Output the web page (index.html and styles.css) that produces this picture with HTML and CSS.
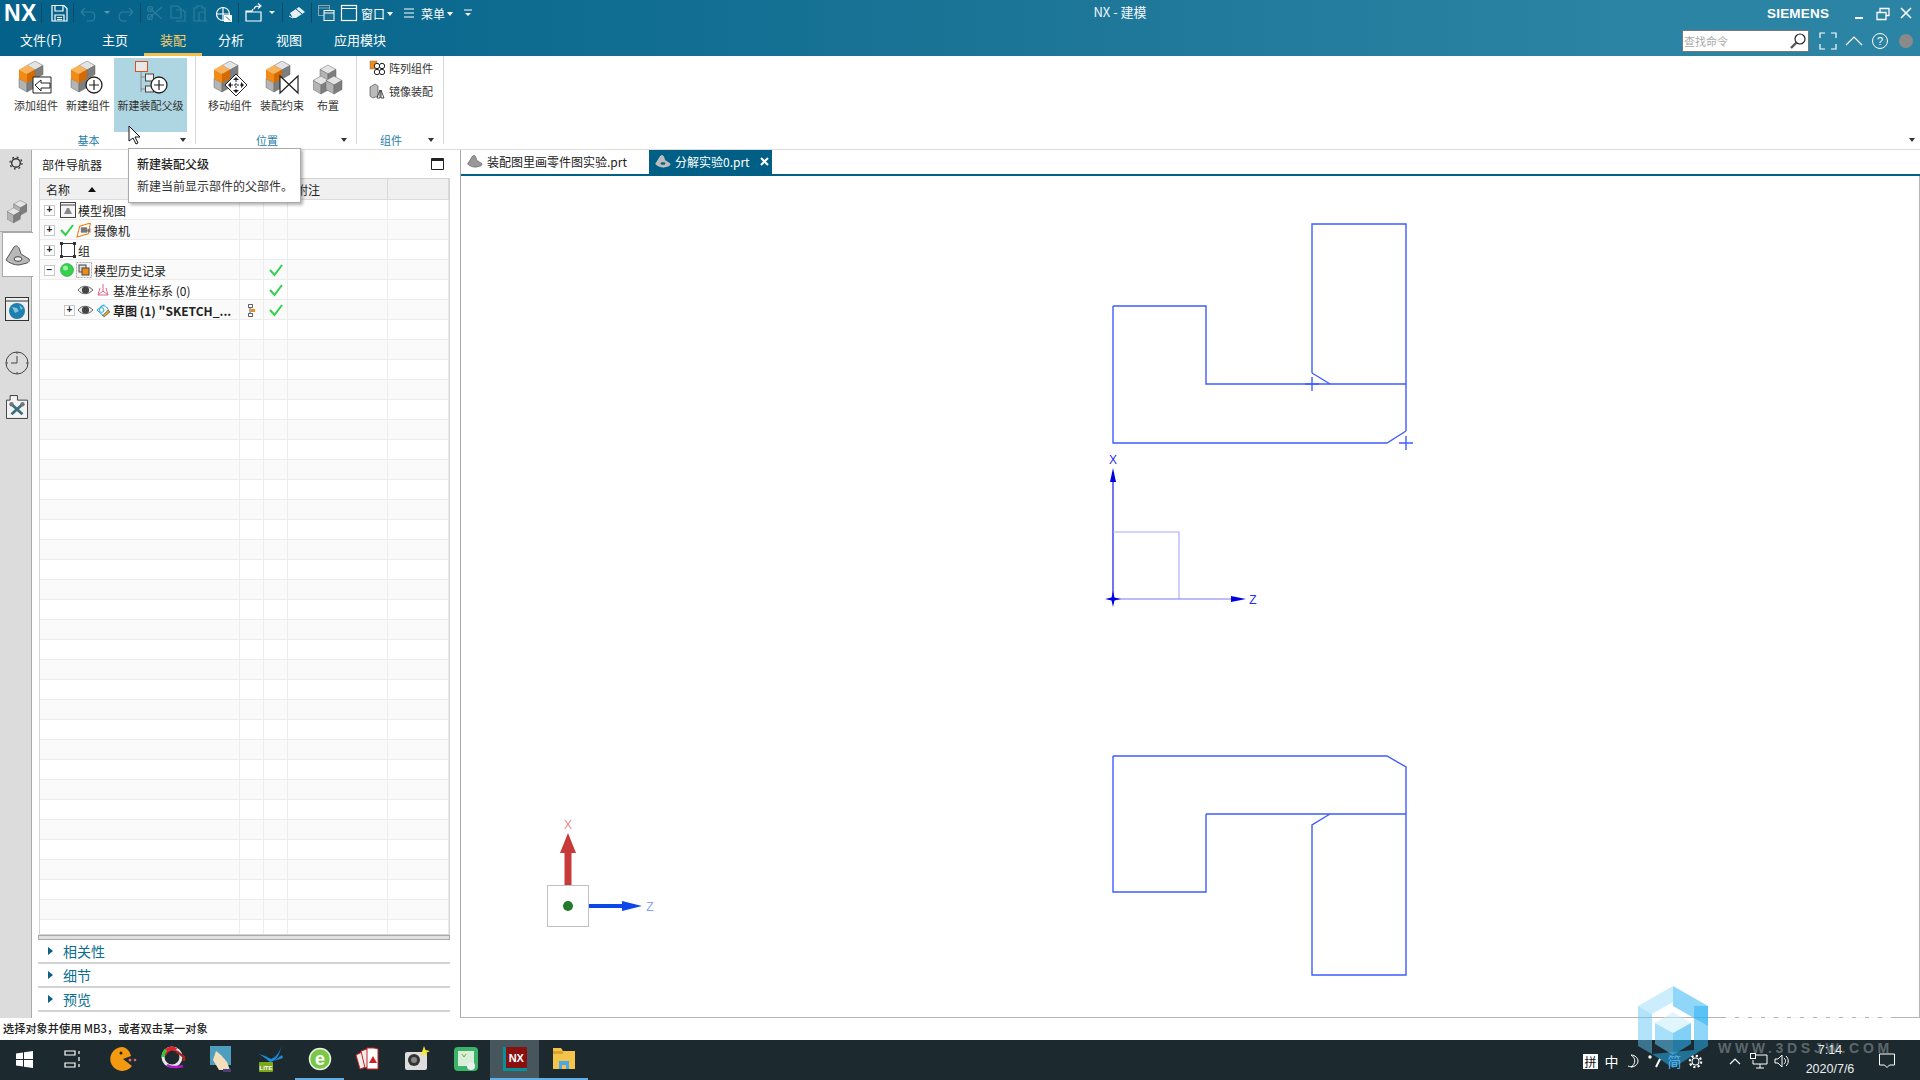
FILE: index.html
```html
<!DOCTYPE html>
<html lang="zh-CN">
<head>
  <meta charset="UTF-8">
  <title>NX - 建模</title>
  <link rel="stylesheet" href="styles.css">
</head>
<body>
  <svg class="defs">
    <defs>
      <g id="cube-g">
        <path fill="#e4e4e4" stroke="#666" stroke-width=".5" d="M0 4.500 8 0l8 4.500L8 9z"/>
        <path fill="#b4b4b4" stroke="#666" stroke-width=".5" d="M0 4.500 8 9v9l-8-4.500z"/>
        <path fill="#7e7e7e" stroke="#666" stroke-width=".5" d="M16 4.500 8 9v9l8-4.500z"/>
      </g>
      <g id="cube-o">
        <path fill="#f9b25c" d="M0 4.500 8 0l8 4.500L8 9z"/>
        <path fill="#f28a16" d="M0 4.500 8 9v9l-8-4.500z"/>
        <path fill="#d66a02" d="M16 4.500 8 9v9l8-4.500z"/>
      </g>
      <g id="stack">
        <use href="#cube-g" x="0" y="13"/>
        <use href="#cube-g" x="8" y="0"/>
        <use href="#cube-o" x="0" y="4"/>
      </g>
      <g id="plus-circle">
        <circle r="8" fill="#fff" stroke="#222" stroke-width="1.300"/>
        <path d="M-5 0h10M0-5v10" stroke="#222" stroke-width="1.200"/>
      </g>
      <path id="check" d="M1 7l4.500 5L13 2" fill="none" stroke="#2fd04a" stroke-width="2"/>
      <g id="eye">
        <path d="M0 6c4-5 10-5 15 0-5 5-11 5-15 0z" fill="#eee" stroke="#666"/>
        <circle cx="7.500" cy="6" r="3.600" fill="#444"/>
      </g>
    </defs>
  </svg>

  <header class="topbar">
    <div class="title-row">
      <div class="qa">
        <span class="logo">NX</span>
        <svg class="qa-icons" width="320" height="30" viewBox="41 0 320 30">
          <path class="sep" d="M41.500 3v20M73.500 3v20M140.500 3v20M238.500 3v20M282.500 3v20M311.500 3v20"/>
          <g class="ln">
            <path d="M52 5.500h12l3 3v12.500H52z"/>
            <path d="M55 6v5h8V6M55 21v-6h9v6M57 17.500h5M57 19.500h5"/>
          </g>
          <g class="dim">
            <path d="M81 12h10c5 0 5 9 0 9h-4M81 12l4-4M81 12l4 4"/>
            <path d="M133 12h-10c-5 0-5 9 0 9h4M133 12l-4-4M133 12l-4 4"/>
            <path d="M149 8l6 5 7-6M149 18l6-5 7 6"/>
            <circle cx="150" cy="9" r="2.500"/><circle cx="150" cy="17" r="2.500"/>
            <path d="M171 6h7l3 3v9h-10zM176 10h7l2 2v9h-9"/>
            <path d="M194 8h3V6h5v2h3v13h-11zM200 12h5M199 12v9h8"/>
          </g>
          <path class="tri-dim" d="M104 11h6l-3 3z"/>
          <g class="ln">
            <circle cx="223" cy="14" r="6.500"/>
            <path d="M216 14h14M223 7v14"/>
          </g>
          <rect x="224" y="15" width="8" height="7" fill="#fff"/>
          <path d="M226 16.500l4 4" stroke="#04628a" stroke-width="1"/>
          <g class="ln">
            <path d="M246 12h15v9h-15zM246 12v-1h6l1-2"/>
            <path d="M254 9c1-3 3-3 6-3M258 3.500l3 2.500-3 2.500"/>
          </g>
          <path class="tri" d="M269 11h6l-3 3z"/>
          <path fill="#e8f1f5" d="M290 13l9-6 6 5-9 6-3 0z"/>
          <path d="M296 9l6 5" stroke="#04628a"/>
          <path d="M289 16l4 2" stroke="#e8f1f5"/>
          <rect x="318.500" y="5.500" width="11" height="10" class="gray-ln"/>
          <path d="M319 8h10" class="gray-ln"/>
          <rect x="324" y="10.500" width="10" height="10" fill="#1a7090" stroke="#fff"/>
          <path d="M324 13h10" stroke="#fff"/>
          <rect x="341.500" y="5.500" width="15" height="15" class="ln"/>
          <path d="M342 8.500h14" stroke="#fff"/>
        </svg>
        <span class="qa-text">窗口</span>
        <span class="tri-d"></span>
        <svg class="burger" width="12" height="12" viewBox="0 0 12 12"><path d="M1 2h10M1 6h10M1 10h10" stroke="#fff"/></svg>
        <span class="qa-text">菜单</span>
        <span class="tri-d"></span>
        <svg class="more" width="10" height="10" viewBox="0 0 10 10"><path d="M1 2h8" stroke="#fff"/><path d="M2 5h6L5 8z" fill="#fff"/></svg>
      </div>
      <div class="win-title">NX - 建模</div>
      <div class="siemens">SIEMENS</div>
      <svg class="win-btns" width="70" height="30" viewBox="0 0 70 30">
        <path d="M5 18h8" stroke="#fff" stroke-width="2"/>
        <path d="M27 12.500h9v7h-9zM30 12v-3.500h9v7h-3" fill="none" stroke="#fff" stroke-width="1.300"/>
        <path d="M51 8l10 10M61 8 51 18" stroke="#fff" stroke-width="1.600"/>
      </svg>
    </div>
    <div class="menu-row">
      <div class="menu-tab menu-file">文件(F)</div>
      <div class="menu-tab">主页</div>
      <div class="menu-tab menu-active">装配</div>
      <div class="menu-tab">分析</div>
      <div class="menu-tab">视图</div>
      <div class="menu-tab">应用模块</div>
      <div class="menu-right">
        <div class="search">
          <span>查找命令</span>
          <svg width="18" height="18" viewBox="0 0 18 18"><circle cx="11" cy="7" r="5" fill="none" stroke="#222" stroke-width="1.200"/><path d="M7.500 10.500 2 16" stroke="#555" stroke-width="2.400"/></svg>
        </div>
        <svg width="110" height="24" viewBox="0 0 110 24">
          <path d="M11 9V4h5M22 4h5v5M11 15v5h5M27 15v5h-5" fill="none" stroke="#fff" stroke-width="1.200"/>
          <path d="M37 16l8-8 8 8" fill="none" stroke="#fff" stroke-width="1.200"/>
          <circle cx="71" cy="12" r="7.500" fill="none" stroke="#fff"/>
          <text x="71" y="16" class="help">?</text>
          <circle cx="97" cy="12" r="7" fill="#8a8a8a"/>
        </svg>
      </div>
    </div>
  </header>

  <section class="ribbon">
    <div class="r-group r-basic">
      <div class="r-body">
        <div class="big-btn">
          <svg width="48" height="34" viewBox="0 0 48 34">
            <use href="#stack" x="7"/>
            <path d="M21 16h18v16H21z" fill="#fff" stroke="#222"/>
            <path d="M23 24l6-5v3h9v5h-9v3z" fill="#fff" stroke="#222"/>
          </svg>
          <span>添加组件</span>
        </div>
        <div class="big-btn">
          <svg width="48" height="34" viewBox="0 0 48 34">
            <use href="#stack" x="7"/>
            <use href="#plus-circle" x="30" y="24"/>
          </svg>
          <span>新建组件</span>
        </div>
        <div class="big-btn big-hover">
          <svg width="48" height="34" viewBox="0 0 48 34">
            <rect x="8.500" y=".5" width="12" height="10" fill="#e8e8e8" stroke="#d4541a"/>
            <path d="M14 11v20M14 16h4M14 28h4" stroke="#888"/>
            <rect x="18.500" y="13" width="8" height="7" fill="#eee" stroke="#444"/>
            <rect x="18.500" y="25" width="8" height="6" fill="#eee" stroke="#444"/>
            <use href="#plus-circle" x="32" y="24"/>
          </svg>
          <span>新建装配父级</span>
        </div>
      </div>
      <div class="r-foot"><span>基本</span><i class="tri-s"></i></div>
    </div>
    <div class="r-group r-pos">
      <div class="r-body">
        <div class="big-btn">
          <svg width="48" height="36" viewBox="0 0 48 36">
            <use href="#stack" x="8"/>
            <path d="M30 13l11 11-11 11-11-11z" fill="#fff" stroke="#222"/>
            <path d="M30 16l3 3h-6zM30 32l3-3h-6zM22 24l3-3v6zM38 24l-3-3v6z" fill="#222"/>
            <path d="M30 19v10M25 24h10" stroke="#222" stroke-dasharray="2 1"/>
          </svg>
          <span class="lbl-up">移动组件</span>
        </div>
        <div class="big-btn">
          <svg width="48" height="34" viewBox="0 0 48 34">
            <use href="#stack" x="8"/>
            <path d="M22 15v17l18-17v17z" fill="#fff" stroke="#222" stroke-width="1.200"/>
          </svg>
          <span>装配约束</span>
        </div>
        <div class="big-btn big-narrow">
          <svg width="30" height="34" viewBox="0 0 30 34">
            <use href="#cube-g" x="7" y="4"/>
            <use href="#cube-g" x="0" y="15"/>
            <use href="#cube-g" x="13" y="15"/>
          </svg>
          <span>布置</span>
        </div>
      </div>
      <div class="r-foot"><span>位置</span><i class="tri-s"></i></div>
    </div>
    <div class="r-group r-comp">
      <div class="r-body small-col">
        <div class="small-btn">
          <svg width="16" height="16" viewBox="0 0 16 16">
            <rect x="1" y="1" width="7" height="8" fill="#f28a16" stroke="#777" stroke-width=".5"/>
            <circle cx="8" cy="6" r="2.700" fill="#fff" stroke="#222"/><circle cx="13" cy="6" r="2.700" fill="#fff" stroke="#222"/>
            <circle cx="8" cy="12" r="2.700" fill="#fff" stroke="#222"/><circle cx="13" cy="12" r="2.700" fill="#fff" stroke="#222"/>
          </svg>
          <span>阵列组件</span>
        </div>
        <div class="small-btn">
          <svg width="16" height="16" viewBox="0 0 16 16">
            <path d="M1 4l5-3 3 2v10l-5 2-3-2z" fill="#bbb" stroke="#555" stroke-width=".7"/>
            <path d="M8 15l3-8v8zM12 15V7l3 8z" fill="#fff" stroke="#222" stroke-width=".8"/>
          </svg>
          <span>镜像装配</span>
        </div>
      </div>
      <div class="r-foot"><span>组件</span><i class="tri-s"></i></div>
    </div>
    <div class="r-rest"><i class="tri-s"></i></div>
  </section>

  <main class="main">
    <aside class="strip">
      <div class="strip-item s-gear">
        <svg width="14" height="14" viewBox="0 0 14 14"><circle cx="7" cy="7" r="4.300" fill="none" stroke="#333" stroke-width="1.400"/><circle cx="7" cy="7" r="6" fill="none" stroke="#333" stroke-width="1.200" stroke-dasharray="2 2.700"/></svg>
      </div>
      <div class="strip-item s-parts">
        <svg width="20" height="24" viewBox="0 0 24 28"><use href="#cube-g" x="8" y="0"/><use href="#cube-g" x="0" y="9"/></svg>
      </div>
      <div class="strip-item s-active">
        <svg width="26" height="22" viewBox="0 0 26 22">
          <path d="M1 16 9 3c2-2 4-1 5 1l2 6 8 5c1 2 0 3-2 4l-8 2c-5 0-10-2-13-5z" fill="#b8b8b8" stroke="#555"/>
          <ellipse cx="13" cy="15" rx="4" ry="2.300" fill="#eee" stroke="#444"/>
        </svg>
      </div>
      <div class="strip-item s-web">
        <svg width="24" height="24" viewBox="0 0 24 24">
          <rect x=".5" y=".5" width="23" height="23" fill="#eee" stroke="#333"/>
          <path d="M1 4h22" stroke="#333"/>
          <circle cx="12" cy="14" r="8" fill="#1f7fae"/>
          <path d="M7 10l5 1 2 3-4 2zM14 8l4 3-2 2z" fill="#7cc6dd"/>
        </svg>
      </div>
      <div class="strip-item s-clock">
        <svg width="24" height="24" viewBox="0 0 24 24"><circle cx="12" cy="12" r="11" fill="none" stroke="#444"/><path d="M12 5v7H6M12 1v2M12 21v2M1 12h2M21 12h2" fill="none" stroke="#444"/></svg>
      </div>
      <div class="strip-item s-tools">
        <svg width="22" height="24" viewBox="0 0 24 26">
          <path d="M.5 5.500h4v-5h8v5h11v20H.5z" fill="#f3f3f3" stroke="#333"/>
          <path d="M6 21 18 10M6 10l12 11" stroke="#3b6f7e" stroke-width="3"/>
          <circle cx="18" cy="10" r="2.400" fill="#777"/><circle cx="6" cy="10" r="2.400" fill="#777"/>
        </svg>
      </div>
    </aside>

    <div class="nav">
      <div class="nav-head">
        <span>部件导航器</span>
        <svg width="13" height="12" viewBox="0 0 13 12"><path d="M.5.500h12v11H.5z" fill="#fff" stroke="#222"/><path d="M1 2h11" stroke="#222" stroke-width="2"/></svg>
      </div>
      <div class="tbl">
        <div class="row row-head"><i class="c-name">名称<b class="sort"></b></i><i></i><i></i><i class="c-note">附注</i><i></i></div>

        <div class="row">
          <i class="c-name"><u class="exp">+</u>
            <svg class="ti" width="16" height="16" viewBox="0 0 16 16"><rect x=".5" y=".5" width="15" height="15" fill="#f5f5f5" stroke="#444"/><path d="M1 3h14" stroke="#444"/><path d="M4 12l3-6 2 0 3 6z" fill="#888"/></svg>
            模型视图</i><i></i><i></i><i></i><i></i>
        </div>
        <div class="row alt">
          <i class="c-name"><u class="exp">+</u>
            <svg class="ti" width="14" height="14" viewBox="0 0 14 14"><use href="#check"/></svg>
            <svg class="ti" width="16" height="15" viewBox="0 0 14 14"><path d="M.5 13 3 3l10-3-2 10z" fill="#fff" stroke="#ef7e0f"/><rect x="4" y="4" width="6" height="5" fill="#777"/><path d="M10 6l3-1v4l-3-1z" fill="#777"/></svg>
            摄像机</i><i></i><i></i><i></i><i></i>
        </div>
        <div class="row">
          <i class="c-name"><u class="exp">+</u>
            <svg class="ti" width="16" height="16" viewBox="0 0 16 16"><rect x="1.500" y="1.500" width="13" height="13" fill="none" stroke="#333"/><path d="M0 0h3v3H0zM13 0h3v3h-3zM0 13h3v3H0zM13 13h3v3h-3z" fill="#333"/></svg>
            组</i><i></i><i></i><i></i><i></i>
        </div>
        <div class="row alt">
          <i class="c-name"><u class="exp">−</u>
            <svg class="ti" width="14" height="14" viewBox="0 0 14 14"><circle cx="7" cy="7" r="6.500" fill="#35d14a" stroke="#1f8f30" stroke-width=".5"/><circle cx="5.500" cy="5" r="2.500" fill="#9df0a8"/></svg>
            <svg class="ti" width="16" height="16" viewBox="0 0 16 16"><rect x=".5" y=".5" width="15" height="15" fill="#f4f4f4" stroke="#aaa" stroke-dasharray="2 1"/><rect x="3" y="3" width="7" height="7" fill="#ddd" stroke="#444"/><rect x="6" y="6" width="7" height="7" fill="#f28a16" stroke="#444"/></svg>
            模型历史记录</i><i></i><i class="c-chk"><svg width="14" height="14" viewBox="0 0 14 14"><use href="#check"/></svg></i><i></i><i></i>
        </div>
        <div class="row">
          <i class="c-name c-sub"><svg class="ti" width="15" height="12" viewBox="0 0 15 12"><use href="#eye"/></svg>
            <svg class="ti" width="14" height="14" viewBox="0 0 14 14"><path d="M7 1v7M7 8 2 12M7 8l5 4M2 12h10M4 5l-2 7M10 5l2 7" fill="none" stroke="#dd6a88"/></svg>
            基准坐标系 (0)</i><i></i><i class="c-chk"><svg width="14" height="14" viewBox="0 0 14 14"><use href="#check"/></svg></i><i></i><i></i>
        </div>
        <div class="row alt">
          <i class="c-name c-sub c-bold"><u class="exp">+</u><svg class="ti" width="15" height="12" viewBox="0 0 15 12"><use href="#eye"/></svg>
            <svg class="ti" width="14" height="15" viewBox="0 0 15 15"><path d="M1 7 9 1M1 7l8 7M5 3c5-2 9 2 8 6" fill="none" stroke="#19a6d8"/><circle cx="6" cy="7" r="2.500" fill="none" stroke="#19a6d8"/><path d="M7 13l6-6 2 2-6 5z" fill="#d9a531" stroke="#222" stroke-width=".5"/></svg>
            草图 (1) "SKETCH_...</i>
          <i class="c-chk"><svg width="8" height="13" viewBox="0 0 8 13"><path d="M.5.500h4v3h-4zM.5 9.500h4v3h-4zM2 4v5" fill="#fff" stroke="#333" stroke-width=".8"/><rect x="3" y="5" width="4" height="3" fill="#f28a16"/></svg></i>
          <i class="c-chk"><svg width="14" height="14" viewBox="0 0 14 14"><use href="#check"/></svg></i><i></i><i></i>
        </div>

        <div class="row"><i></i><i></i><i></i><i></i><i></i></div>
        <div class="row alt"><i></i><i></i><i></i><i></i><i></i></div>
        <div class="row"><i></i><i></i><i></i><i></i><i></i></div>
        <div class="row alt"><i></i><i></i><i></i><i></i><i></i></div>
        <div class="row"><i></i><i></i><i></i><i></i><i></i></div>
        <div class="row alt"><i></i><i></i><i></i><i></i><i></i></div>
        <div class="row"><i></i><i></i><i></i><i></i><i></i></div>
        <div class="row alt"><i></i><i></i><i></i><i></i><i></i></div>
        <div class="row"><i></i><i></i><i></i><i></i><i></i></div>
        <div class="row alt"><i></i><i></i><i></i><i></i><i></i></div>
        <div class="row"><i></i><i></i><i></i><i></i><i></i></div>
        <div class="row alt"><i></i><i></i><i></i><i></i><i></i></div>
        <div class="row"><i></i><i></i><i></i><i></i><i></i></div>
        <div class="row alt"><i></i><i></i><i></i><i></i><i></i></div>
        <div class="row"><i></i><i></i><i></i><i></i><i></i></div>
        <div class="row alt"><i></i><i></i><i></i><i></i><i></i></div>
        <div class="row"><i></i><i></i><i></i><i></i><i></i></div>
        <div class="row alt"><i></i><i></i><i></i><i></i><i></i></div>
        <div class="row"><i></i><i></i><i></i><i></i><i></i></div>
        <div class="row alt"><i></i><i></i><i></i><i></i><i></i></div>
        <div class="row"><i></i><i></i><i></i><i></i><i></i></div>
        <div class="row alt"><i></i><i></i><i></i><i></i><i></i></div>
        <div class="row"><i></i><i></i><i></i><i></i><i></i></div>
        <div class="row alt"><i></i><i></i><i></i><i></i><i></i></div>
        <div class="row"><i></i><i></i><i></i><i></i><i></i></div>
        <div class="row alt"><i></i><i></i><i></i><i></i><i></i></div>
        <div class="row"><i></i><i></i><i></i><i></i><i></i></div>
        <div class="row alt"><i></i><i></i><i></i><i></i><i></i></div>
        <div class="row"><i></i><i></i><i></i><i></i><i></i></div>
        <div class="row alt"><i></i><i></i><i></i><i></i><i></i></div>
        <div class="row"><i></i><i></i><i></i><i></i><i></i></div>
      </div>
      <div class="splitter"></div>
      <div class="acc"><b></b>相关性</div>
      <div class="acc"><b></b>细节</div>
      <div class="acc"><b></b>预览</div>
    </div>

    <div class="gfx">
      <div class="doc-tabs">
        <div class="doc-tab">
          <svg width="16" height="14" viewBox="0 0 26 22"><path d="M1 16 9 3c2-2 4-1 5 1l2 6 8 5c1 2 0 3-2 4l-8 2c-5 0-10-2-13-5z" fill="#999" stroke="#555"/></svg>
          装配图里画零件图实验.prt
        </div>
        <div class="doc-tab doc-active">
          <svg width="16" height="14" viewBox="0 0 26 22"><path d="M1 16 9 3c2-2 4-1 5 1l2 6 8 5c1 2 0 3-2 4l-8 2c-5 0-10-2-13-5z" fill="#bbb" stroke="#ddd"/><ellipse cx="13" cy="15" rx="4" ry="2" fill="#015f85"/></svg>
          分解实验0.prt
          <svg class="doc-x" width="9" height="9" viewBox="0 0 9 9"><path d="M1 1l7 7M8 1 1 8" stroke="#fff" stroke-width="2"/></svg>
        </div>
      </div>
      <svg class="canvas" width="1458" height="841" viewBox="461 176 1458 841">
        <!-- views are in page coordinates -->
        <g class="cad">
          <path d="M1312 373V224h94v207"/>
          <path d="M1312 373l18 11"/>
          <path d="M1113 306h93v78h200M1406 431l-19 12H1113V306"/>
          <path d="M1305 384h14M1312 377v14M1399 443h14M1406 436v14"/>
          <path d="M1113 756h274l19 11v208h-94V825l18-11M1206 814h200M1113 756v136h93v-78"/>
        </g>
        <g class="axes">
          <path d="M1113 599V480"/>
          <path class="axes-fill" d="M1113 468l3 14h-6z"/>
          <path class="pale" d="M1113 532h66v67"/>
          <path class="pale2" d="M1113 599h120"/>
          <path class="axes-fill" d="M1231 596l15 3-15 3z"/>
          <path class="axes-fill" d="M1113 591l1.500 6.500 6.500 1.500-6.500 1.500-1.500 6.500-1.500-6.500-6.500-1.500 6.500-1.500z"/>
          <text x="1113" y="464" class="lab">X</text>
          <text x="1253" y="604" class="lab">Z</text>
        </g>
        <g>
          <rect x="547.500" y="885.500" width="41" height="41" fill="#fff" stroke="#c0c0c0"/>
          <path d="M564.500 885v-32h-4.500l8-20 8 20h-4.500v32z" fill="#c83a3a"/>
          <circle cx="568" cy="906" r="5" fill="#237a2c"/>
          <path d="M589 904h33v-3l20 5-20 5v-3h-33z" fill="#0c45e8"/>
          <text x="568" y="829" class="lab-x">X</text>
          <text x="650" y="911" class="lab-z">Z</text>
        </g>
      </svg>
    </div>
  </main>

  <footer class="status">选择对象并使用 MB3，或者双击某一对象</footer>

  <nav class="taskbar">
    <div class="tb-slot">
      <svg width="17" height="17" viewBox="0 0 17 17"><path fill="#fff" d="M0 2.500 7 1.500V8H0zM8 1.300 17 0v8H8zM0 9h7v6.500L0 14.500zM8 9h9v8l-9-1.300z"/></svg>
    </div>
    <div class="tb-slot tb-gap">
      <svg width="16" height="18" viewBox="0 0 16 18"><path d="M1 1h10v4H1zM1 13h10v4H1zM15 1v3M15 7v4M15 14v3" fill="none" stroke="#fff" stroke-width="1.200"/></svg>
    </div>
    <div class="tb-slot">
      <svg width="30" height="26" viewBox="0 0 30 26"><path d="M13 1a12 12 0 1 0 10 19l-9-7 8-3C21 5 17 1 13 1z" fill="#f39a10"/><circle cx="12" cy="7" r="1.500" fill="#222"/><circle cx="21" cy="14" r="1.500" fill="#d66"/><circle cx="26" cy="14" r="1.300" fill="#d66"/></svg>
    </div>
    <div class="tb-slot">
      <svg width="26" height="26" viewBox="0 0 26 26"><circle cx="12" cy="11" r="9" fill="none" stroke="#e8e8e8" stroke-width="3"/><path d="M4 9c2-6 8-8 12-5" fill="none" stroke="#e2232b" stroke-width="4"/><path d="M3 11c0-3 1-5 3-7" fill="none" stroke="#2ecc40" stroke-width="3"/><path d="M7 19c5 3 12 2 16 1" fill="none" stroke="#b517c9" stroke-width="2.500"/><path d="M16 5l8 6v4" fill="none" stroke="#a22" stroke-width="2.500"/></svg>
    </div>
    <div class="tb-slot">
      <svg width="24" height="26" viewBox="0 0 24 26"><rect x="0" y="0" width="21" height="19" fill="#4e9fbd"/><path d="M6 5l5 4 6 7 3 8H9L3 14z" fill="#f4dfbc"/><rect x="13" y="23" width="8" height="3" fill="#4b3f7c"/></svg>
    </div>
    <div class="tb-slot">
      <svg width="26" height="28" viewBox="0 0 26 28"><path d="M24 0c-2 6-5 12-11 14L7 11l-6-2 6 4 5 4c6-1 9-6 12-17z" fill="#1a8fe0"/><path d="M24 10l1 3-9 3z" fill="#1a8fe0"/><rect x="1" y="17" width="14" height="10" rx="1" fill="#7ea81c"/><text x="8" y="25" class="lite">LITE</text></svg>
    </div>
    <div class="tb-slot tb-open">
      <svg width="24" height="28" viewBox="0 0 24 28"><circle cx="12" cy="14" r="10.500" fill="#7bc74a" stroke="#eaf5e0" stroke-width="1.500"/><text x="12" y="20" class="ie">e</text></svg>
    </div>
    <div class="tb-slot">
      <svg width="26" height="24" viewBox="0 0 26 24"><path d="M1 8l6-3 4 15-6 2z" fill="#eee" stroke="#c22"/><path d="M6 4l6-2 4 16-6 3z" fill="#eee" stroke="#c22"/><path d="M12 1h7l4 1v20H12z" fill="#fff" stroke="#c22"/><path d="M18 9l4 7h-8z" fill="#c22"/></svg>
    </div>
    <div class="tb-slot">
      <svg width="26" height="26" viewBox="0 0 26 26"><rect x="1" y="6" width="22" height="18" rx="2" fill="#ddd"/><circle cx="10" cy="14" r="6" fill="#333"/><circle cx="10" cy="14" r="3" fill="#888"/><path d="M20 0l1.500 4L26 5l-4 2 1 4-3-3-4 2 2-4z" fill="#f7e53a"/></svg>
    </div>
    <div class="tb-slot">
      <svg width="24" height="28" viewBox="0 0 24 28"><rect x="0" y="2" width="24" height="24" rx="4" fill="#3bb46a"/><rect x="4" y="6" width="16" height="15" fill="#d7efd9"/><circle cx="17" cy="21" r="4" fill="#eee"/><path d="M8 9l2 3 2-3" stroke="#7ea81c" fill="none"/></svg>
    </div>
    <div class="tb-slot tb-nx">
      <div class="nx-tile"><span>NX</span></div>
    </div>
    <div class="tb-slot tb-open">
      <svg width="22" height="22" viewBox="0 0 22 22"><path d="M0 0h8l2 3h12v18H0z" fill="#f4c34a"/><path d="M0 3h10v3H0z" fill="#d9a22c"/><path d="M6 13h10v8h-3v-4H9v4H6z" fill="#4aa8e8"/></svg>
    </div>

    <div class="tray">
      <span class="t-i t-pin">拼</span>
      <span class="t-i">中</span>
      <span class="t-i"><svg width="12" height="14" viewBox="0 0 12 14"><path d="M4 1c5 3 5 9 0 12 4 0 7-3 7-6S8 1 4 1zM1 12c3 1 3 1 5 0" fill="none" stroke="#fff"/></svg></span>
      <span class="t-i"><svg width="14" height="14" viewBox="0 0 14 14"><circle cx="3" cy="3" r="1.700" fill="#fff"/><path d="M13 5 9 13" stroke="#fff" stroke-width="2"/></svg></span>
      <span class="t-i t-jian">简</span>
      <span class="t-i"><svg width="15" height="15" viewBox="0 0 14 14"><circle cx="7" cy="7" r="3.200" fill="none" stroke="#fff"/><circle cx="7" cy="7" r="5.300" fill="none" stroke="#fff" stroke-width="2" stroke-dasharray="2 2.100"/></svg></span>
      <span class="t-i t-chev"><svg width="14" height="10" viewBox="0 0 14 10"><path d="M2 8l5-5 5 5" fill="none" stroke="#fff" stroke-width="1.200"/></svg></span>
      <span class="t-i t-wide"><svg width="18" height="16" viewBox="0 0 18 16"><path d="M5 2h12v9H3V7M10 11v4M6 15h8" fill="none" stroke="#fff"/><rect x=".5" y=".5" width="5" height="5" fill="#1c2a30" stroke="#fff"/></svg></span>
      <span class="t-i"><svg width="16" height="14" viewBox="0 0 16 14"><path d="M1 5h3l4-4v12l-4-4H1zM10 4c2 2 2 4 0 6M12 2c3 3 3 7 0 10" fill="none" stroke="#fff"/></svg></span>
      <div class="clock"><span>7:14</span><span>2020/7/6</span></div>
      <span class="t-note"><svg width="16" height="16" viewBox="0 0 16 16"><path d="M.5 1h15v11h-5L8 14.500 5.500 12h-5z" fill="none" stroke="#fff"/></svg></span>
    </div>
  </nav>

  <div class="tooltip">
    <strong>新建装配父级</strong>
    <span>新建当前显示部件的父部件。</span>
  </div>

  <svg class="cursor" width="14" height="20" viewBox="0 0 14 20"><path d="M1 1v15l4-3 3 6 2-1-3-6h5z" fill="#fff" stroke="#111"/></svg>

  <svg class="mark-hex" width="72" height="84" viewBox="0 0 72 84">
    <path d="M36 1 71 21v20L36 21z" fill="#2bb0f2" opacity=".52"/>
    <path d="M36 1 1 21l14 8 21-12 21 4z" fill="#8fd6f8" opacity=".45"/>
    <path d="M1 21v40l14 8V29z" fill="#60c4f4" opacity=".48"/>
    <path d="M71 21v40L36 83l-21-14 42-4V21z" fill="#2bb0f2" opacity=".52"/>
    <path d="M36 27 18 38l18 10 18-10z" fill="#c8ecfc" opacity=".55"/>
    <path d="M18 38v21l18 11V48z" fill="#60c4f4" opacity=".55"/>
    <path d="M54 38v21L36 70V48z" fill="#2bb0f2" opacity=".6"/>
  </svg>
  <div class="mark-text">WWW.3DSJW.COM</div>
  <div class="mark-ghost"></div>
</body>
</html>
```

FILE: styles.css
```css
html, body {
  margin: 0;
  padding: 0;
}
body {
  width: 1920px;
  height: 1080px;
  overflow: hidden;
  position: relative;
  display: flex;
  flex-direction: column;
  background: #fff;
  color: #222;
  font-family: "Noto Sans CJK SC", "Liberation Sans", sans-serif;
  font-size: 12px;
}
.defs {
  display: none;
}
svg {
  display: block;
  flex: none;
}

/* top bar */
.topbar {
  height: 56px;
  flex: none;
  color: #fff;
  background: linear-gradient(90deg, #04628a 0%, #0f6d92 30%, #1a7496 50%, #2c84a4 85%, #2c84a4 100%);
}
.title-row {
  height: 30px;
  display: flex;
  align-items: flex-start;
}
.qa {
  flex: 0 0 1085px;
  display: flex;
  align-items: center;
  height: 26px;
}
.logo {
  width: 41px;
  padding-left: 4px;
  box-sizing: border-box;
  font: 700 23px "Liberation Sans", sans-serif;
  letter-spacing: .5px;
}
.qa-icons {
  align-self: flex-start;
}
.qa-icons .sep { stroke: #0b4a66; fill: none; }
.qa-icons .ln, .qa-icons rect.ln { fill: none; stroke: #fff; stroke-width: 1.2; }
.qa-icons .dim { fill: none; stroke: #2f7d9d; stroke-width: 1.2; }
.qa-icons .gray-ln { fill: none; stroke: #8fa5b0; }
.qa-icons .tri { fill: #fff; }
.qa-icons .tri-dim { fill: #5d98b0; }
.qa-text {
  font-size: 12px;
  width: 24px;
}
.tri-d {
  width: 0;
  height: 0;
  margin: 1px 16px 0 2px;
  border: 3px solid transparent;
  border-top: 4px solid #fff;
  border-bottom: 0;
}
.burger {
  margin-right: 6px;
  margin-left: -6px;
}
.more {
  margin-left: -6px;
}
.win-title {
  flex: 0 0 70px;
  text-align: center;
  line-height: 24px;
  font-size: 13px;
  color: #f1f6f8;
}
.siemens {
  margin-left: 612px;
  width: 83px;
  font: 700 13.5px/28px "Liberation Sans", sans-serif;
  letter-spacing: .2px;
}
.menu-row {
  height: 26px;
  display: flex;
  align-items: stretch;
}
.menu-tab {
  width: 58px;
  box-sizing: border-box;
  padding-left: 16px;
  font-size: 13px;
  line-height: 20px;
  white-space: nowrap;
}
.menu-file {
  width: 86px;
  padding-left: 20px;
}
.menu-active {
  color: #f7cd6a;
  border-bottom: 3px solid #f5c04a;
}
.menu-tab:nth-child(6) {
  width: 84px;
}
.menu-right {
  margin-left: auto;
  display: flex;
  align-items: flex-start;
  padding-right: 1px;
}
.search {
  width: 127px;
  height: 22px;
  box-sizing: border-box;
  background: #fff;
  border: 1px solid #777;
  display: flex;
  align-items: center;
  justify-content: space-between;
  color: #aaa;
  font-size: 11px;
  padding: 0 1px;
}
.menu-right > svg {
  margin-top: -1px;
}
.help {
  fill: #fff;
  font: 11px "Liberation Sans", sans-serif;
  text-anchor: middle;
}

/* ribbon */
.ribbon {
  height: 93px;
  flex: none;
  display: flex;
  border-bottom: 1px solid #dcdcdc;
}
.r-group {
  display: flex;
  flex-direction: column;
  box-sizing: border-box;
  height: 88px;
  border-right: 1px solid #d8d8d8;
}
.r-basic { width: 196px; padding-left: 10px; }
.r-pos { width: 161px; padding-left: 8px; }
.r-comp { width: 87px; }
.r-body {
  display: flex;
  flex: none;
  height: 76px;
  padding-top: 2px;
  box-sizing: border-box;
}
.big-btn {
  width: 52px;
  height: 74px;
  display: flex;
  flex-direction: column;
  align-items: center;
  padding-top: 3px;
  box-sizing: border-box;
  font-size: 11px;
  color: #333;
}
.big-btn span {
  margin-top: 2px;
  line-height: 16px;
  white-space: nowrap;
}
.big-btn .lbl-up {
  margin-top: 0;
}
.big-hover {
  width: 73px;
  background: #aed6e2;
}
.big-narrow {
  width: 40px;
}
.small-col {
  flex-direction: column;
  padding: 0 0 0 12px;
}
.small-btn {
  height: 23px;
  display: flex;
  align-items: center;
  gap: 4px;
  font-size: 11px;
  color: #333;
  white-space: nowrap;
}
.r-foot {
  height: 15px;
  flex: none;
  display: flex;
  align-items: center;
  color: #1f80aa;
  font-size: 11px;
}
.r-basic .r-foot { margin-left: -10px; }
.r-pos .r-foot { margin-left: -8px; }
.r-foot span {
  flex: 1;
  text-align: center;
}
.tri-s {
  width: 0;
  height: 0;
  flex: none;
  margin: 0 9px 0 3px;
  border: 3px solid transparent;
  border-top: 4px solid #333;
  border-bottom: 0;
}
.r-rest {
  flex: 1;
  display: flex;
  justify-content: flex-end;
  align-items: flex-end;
  padding-bottom: 7px;
}
.r-rest .tri-s {
  margin-right: 5px;
}

/* main area */
.main {
  height: 868px;
  flex: none;
  display: flex;
}
.strip {
  width: 32px;
  flex: none;
  background: #dcdcdc;
  box-sizing: border-box;
  border-right: 1px solid #a9a9a9;
  display: flex;
  flex-direction: column;
}
.strip-item {
  display: flex;
  justify-content: center;
  align-items: center;
  box-sizing: border-box;
}
.s-gear { height: 26px; }
.s-parts { height: 56px; padding: 16px 0 0 3px; border-bottom: 1px solid #a9a9a9; }
.s-active {
  height: 45px;
  width: 31px;
  margin: 0 -1px 0 2px;
  background: #fff;
  border: 1px solid #a9a9a9;
  border-right: 0;
}
.s-web { height: 63px; padding-left: 3px; }
.s-clock { height: 45px; padding-left: 3px; }
.s-tools { height: 44px; padding-left: 3px; }

.nav {
  width: 429px;
  flex: none;
  box-sizing: border-box;
  padding: 0 10px 0 6px;
  border-right: 1px solid #a9a9a9;
}
.nav-head {
  height: 28px;
  display: flex;
  align-items: center;
  justify-content: space-between;
  padding: 0 6px 0 4px;
  font-size: 12px;
}
.tbl {
  height: 757px;
  overflow: hidden;
  box-sizing: border-box;
  border: 1px solid #d4d4d4;
  margin-left: 1px;
}
.row {
  display: grid;
  grid-template-columns: 200px 24px 24px 100px 1fr;
  height: 20px;
  box-sizing: border-box;
  border-bottom: 1px solid #ececec;
}
.row i {
  font-style: normal;
  border-right: 1px solid #ececec;
  box-sizing: border-box;
  padding-top: 1px;
  display: flex;
  align-items: center;
  white-space: nowrap;
  overflow: hidden;
}
.row.alt {
  background: #fafafa;
}
.row-head {
  height: 21px;
  background: #f0f0f0;
  border-bottom: 1px solid #dcdcdc;
}
.row-head i {
  border-right-color: #d8d8d8;
}
.row-head .c-name {
  padding-left: 6px;
}
.c-note {
  padding-left: 8px;
}
.sort {
  margin-left: 16px;
  width: 0;
  height: 0;
  border: 4px solid transparent;
  border-top: 0;
  border-bottom: 5px solid #111;
}
.c-name {
  gap: 2px;
}
.exp {
  width: 9px;
  height: 9px;
  margin: 0 3px 0 4px;
  border: 1px solid #c8c8c8;
  background: #fff;
  text-decoration: none;
  display: flex;
  align-items: center;
  justify-content: center;
  font: 700 10px/1 "Liberation Sans", sans-serif;
  color: #222;
  flex: none;
}
.c-sub {
  padding-left: 38px;
  gap: 3px;
}
.c-sub .exp {
  margin: 0 0 0 -14px;
}
.c-bold {
  font-weight: 700;
}
.c-chk {
  justify-content: center;
}
.splitter {
  height: 5px;
  box-sizing: border-box;
  background: #e0e0e0;
  border: 1px solid #aaa;
}
.acc {
  height: 24px;
  box-sizing: border-box;
  border-bottom: 2px solid #d2d2d2;
  display: flex;
  align-items: center;
  padding: 0 0 0 10px;
  color: #0a6d92;
  font-size: 14px;
}
.acc b {
  width: 0;
  height: 0;
  margin-right: 10px;
  border: 4px solid transparent;
  border-left: 5px solid #0a5f82;
  border-right: 0;
}

.gfx {
  flex: 1;
  display: flex;
  flex-direction: column;
  min-width: 0;
}
.doc-tabs {
  height: 26px;
  flex: none;
  box-sizing: border-box;
  border-bottom: 2px solid #015f85;
  display: flex;
  padding-left: 6px;
}
.doc-tab {
  display: flex;
  align-items: center;
  gap: 4px;
  width: 182px;
  height: 24px;
  padding-bottom: 2px;
  box-sizing: border-box;
  font-size: 12px;
  color: #222;
  white-space: nowrap;
}
.doc-active {
  width: 123px;
  padding-left: 6px;
  background: #015f85;
  color: #fff;
}
.doc-x {
  margin-left: 6px;
}
.canvas {
  flex: 1;
  border-bottom: 1px solid #b5b5b5;
  border-right: 1px solid #b5b5b5;
  box-sizing: content-box;
  height: 841px;
}
.cad {
  fill: none;
  stroke: #3e5cff;
  stroke-width: 1.400;
}
.axes {
  fill: none;
  stroke: #0000e6;
  stroke-width: 1.100;
}
.axes .axes-fill {
  fill: #0000e6;
  stroke: none;
}
.axes .pale {
  stroke: #a8a8ff;
}
.axes .pale2 {
  stroke: #7a7af2;
}
.lab, .lab-x, .lab-z {
  font: 12px "Liberation Sans", sans-serif;
  text-anchor: middle;
  stroke: none;
  fill: #2a2af0;
}
.lab-x { fill: #e58a8a; }
.lab-z { fill: #8a9bff; }

/* status and taskbar */
.status {
  height: 22px;
  flex: none;
  line-height: 20px;
  padding-left: 3px;
  font-size: 11.200px;
  font-weight: 500;
}
.taskbar {
  height: 40px;
  flex: none;
  background: #1c2a30;
  display: flex;
  align-items: stretch;
  color: #fff;
}
.tb-slot {
  width: 48.800px;
  flex: none;
  display: flex;
  align-items: center;
  justify-content: center;
  box-sizing: border-box;
  border-bottom: 2px solid transparent;
}
.tb-slot:first-child { width: 48px; }
.tb-gap { width: 52px; padding-right: 4px; }
.tb-open { border-bottom-color: #62aee6; }
.tb-nx {
  background: #47555c;
  border-bottom-color: #62aee6;
}
.nx-tile {
  width: 24px;
  height: 24px;
  background: #8a1010;
  border-left: 3px solid #05919a;
  border-bottom: 3px solid #05919a;
  box-sizing: border-box;
  display: flex;
  align-items: center;
  justify-content: center;
  font: 700 11px "Liberation Sans", sans-serif;
}
.lite {
  fill: #fff;
  font: 700 6px "Liberation Sans", sans-serif;
  text-anchor: middle;
}
.ie {
  fill: #fff;
  font: 700 18px "Liberation Sans", sans-serif;
  text-anchor: middle;
}
.tray {
  margin-left: auto;
  display: flex;
  align-items: center;
  padding-top: 2px;
  position: relative;
  z-index: 2;
}
.t-i {
  width: 21px;
  display: flex;
  justify-content: center;
  font-size: 14px;
}
.t-pin {
  width: 15px;
  height: 15px;
  margin: 0 3px;
  background: #fff;
  color: #111;
  font-size: 12px;
  line-height: 15px;
}
.t-jian {
  color: #57b4f0;
}
.t-chev { margin-left: 17px; width: 24px; }
.t-wide { width: 24px; }
.clock {
  width: 76px;
  display: flex;
  flex-direction: column;
  align-items: center;
  font: 12.500px/19px "Liberation Sans", sans-serif;
  color: #eee;
  margin-top: -2px;
}
.t-note {
  width: 38px;
  margin-right: 14px;
  display: flex;
  justify-content: center;
}

/* things lying over the page */
.tooltip {
  position: absolute;
  left: 128px;
  top: 148px;
  width: 173px;
  height: 55px;
  box-sizing: border-box;
  padding: 7px 0 0 8px;
  background: #fff;
  border: 1px solid #ababab;
  box-shadow: 2px 2px 3px rgba(0, 0, 0, .3);
  display: flex;
  flex-direction: column;
  gap: 6px;
  line-height: 16px;
  font-size: 12px;
  color: #333;
  white-space: nowrap;
}
.tooltip strong {
  font-weight: 500;
  color: #222;
}
.cursor {
  position: absolute;
  left: 128px;
  top: 125px;
}
.mark-hex {
  position: absolute;
  left: 1637px;
  top: 985px;
}
.mark-text {
  position: absolute;
  left: 1718px;
  top: 1040px;
  font: 700 14px/16px "Liberation Sans", sans-serif;
  letter-spacing: 3.700px;
  color: rgba(255, 255, 255, .3);
  white-space: nowrap;
}
.mark-ghost {
  position: absolute;
  left: 1726px;
  top: 1016px;
  width: 168px;
  height: 3px;
  background: repeating-linear-gradient(90deg, rgba(255, 255, 255, .85) 0 9px, transparent 9px 13px);
}
```
